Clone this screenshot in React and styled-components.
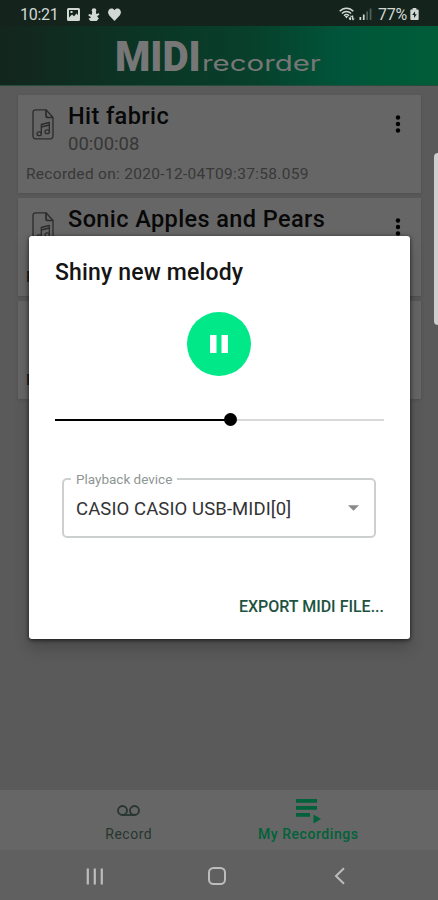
import styled, { createGlobalStyle } from 'styled-components';

const recordings = [
    { id: 1, name: 'Hit fabric', duration: '00:00:08', date: '2020-12-04T09:37:58.059' },
    { id: 2, name: 'Sonic Apples and Pears', duration: '00:00:12', date: '2020-12-04T09:36:21.310', dark: true },
    { id: 3, name: 'Shiny new melody', duration: '00:00:15', date: '2020-12-04T09:35:02.127', dark: true },
];

function StatusBar () {
    return (
        <StatusBox>
            <Clock>10:21</Clock>
            <StatusIcons>
                <svg width="13" height="13" viewBox="0 0 13 13">
                    <path fillRule="evenodd" d="M1.5 0h10A1.5 1.5 0 0 1 13 1.5v10a1.5 1.5 0 0 1-1.5 1.5h-10A1.5 1.5 0 0 1 0 11.5v-10A1.5 1.5 0 0 1 1.500 0zM2 2v7.500l3-3 2 1.800L9.500 5.500 11 7V2zM3.500 3h2v2h-2z" fill="currentColor" />
                </svg>
                <svg width="12" height="13" viewBox="0 0 12 13">
                    <circle cx="6" cy="2.600" r="2.300" fill="currentColor" />
                    <path d="M4.200 4h3.700l.4 2 2.500-.8.7 1.400-2.400 1.600 1.800 2.400L8.700 13H2.500L.5 10.800l2.700-1.600L.3 7.600 1 6l2.800.8z" fill="currentColor" />
                </svg>
                <svg width="13" height="13" viewBox="0 0 13 13">
                    <path d="M6.500 13 1.300 7.500C-1.200 4.600.4.800 3.400.600 4.800.5 5.800 1.100 6.500 2.200 7.200 1.100 8.200.5 9.600.6c3 .2 4.600 4 2.100 6.900z" fill="currentColor" />
                </svg>
            </StatusIcons>
            <StatusRight>
                <svg width="17" height="14" viewBox="0 0 17 14">
                    <g fill="none" stroke="currentColor" strokeWidth="1.500">
                        <path d="M.7 4.300C4.500.1 10.500.1 14.300 4.300" />
                        <path d="M2.900 6.600c2.700-2.800 6.500-2.800 9.200 0" />
                        <path d="M5 8.700c1.500-1.500 3.500-1.500 5 0" />
                    </g>
                    <path d="M5.800 9h3.400L7.500 11.500zM9.500 10.500h2V8L13 10h-1v3h-1.500zM12.800 8.500h1.500v3h1.500L14 13.500l-1.200-1.500z" fill="currentColor" />
                </svg>
                <svg width="13" height="12" viewBox="0 0 13 12">
                    <path d="M.5 9h1.700v3H.5zM3.900 6.500h1.700V12H3.900z" fill="currentColor" />
                    <path d="M7.300 3.500H9V12H7.300zM10.700.5h1.700V12h-1.700z" fill="#52605a" />
                </svg>
                <Percent>77%</Percent>
                <svg width="9" height="12" viewBox="0 0 9 13">
                    <path fillRule="evenodd" d="M2.500 0h4v1.500H8A1 1 0 0 1 9 2.500V12a1 1 0 0 1-1 1H1a1 1 0 0 1-1-1V2.500a1 1 0 0 1 1-1h1.500zM5.100 3.500 2 7.700h2v3.200l3-4.100H5.100z" fill="currentColor" />
                </svg>
            </StatusRight>
        </StatusBox>
    );
}

function Recording ({ item }) {
    return (
        <Card>
            <CardTop>
                <FileIcon width="22" height="31" viewBox="0 0 22 31">
                    <g fill="none" stroke="currentColor" strokeWidth="1.300" strokeLinejoin="round">
                        <path d="M14 .8H3.500A2.500 2.500 0 0 0 1 3.300v24A2.500 2.500 0 0 0 3.500 29.800h15a2.500 2.500 0 0 0 2.500-2.500V8.500z" />
                        <path d="M14 .8v5.700a2 2 0 0 0 2 2h5" strokeWidth="1.700" />
                        <path d="M9.300 24.800v-9.300l8-2v9.300M9.300 18l8-2" />
                        <ellipse cx="7.200" cy="24.800" rx="2.200" ry="1.900" />
                        <ellipse cx="15.200" cy="22.800" rx="2.200" ry="1.900" />
                    </g>
                </FileIcon>
                <CardText>
                    <Name>{item.name}</Name>
                    <Duration>{item.duration}</Duration>
                </CardText>
                <MoreIcon width="6" height="20" viewBox="0 0 6 20">
                    <circle cx="3" cy="3.500" r="2.200" />
                    <circle cx="3" cy="10" r="2.200" />
                    <circle cx="3" cy="16.500" r="2.200" />
                </MoreIcon>
            </CardTop>
            <RecordedOn $dark={item.dark}>Recorded on: {item.date}</RecordedOn>
        </Card>
    );
}

function PlayerDialog () {
    const progress = 53.4;

    return (
        <Dialog>
            <DialogTitle>Shiny new melody</DialogTitle>
            <PauseButton>
                <svg width="18" height="18" viewBox="0 0 18 18">
                    <path d="M0 0h6.500v18H0zM11.500 0H18v18h-6.500z" fill="#fff" />
                </svg>
            </PauseButton>
            <Slider>
                <Played style={{ width: `${progress}%` }} />
                <Thumb />
                <Remaining />
            </Slider>
            <Select>
                <SelectLabel>Playback device</SelectLabel>
                <SelectValue>CASIO CASIO USB-MIDI[0]</SelectValue>
                <svg width="11" height="6" viewBox="0 0 12 6">
                    <path d="M0 0h12L6 6z" fill="#8a8a8a" />
                </svg>
            </Select>
            <ExportButton>EXPORT MIDI FILE...</ExportButton>
        </Dialog>
    );
}

export default function App () {
    return (
        <>
            <GlobalStyle />
            <Screen>
                <StatusBar />
                <Header>
                    <LogoBold>MIDI</LogoBold>
                    <LogoThin>recorder</LogoThin>
                </Header>
                <List>
                    {recordings.map((item) => <Recording key={item.id} item={item} />)}
                </List>
                <TabBar>
                    <Tab>
                        <TabIcon>
                            <svg width="23" height="12" viewBox="0 0 23 12">
                                <g fill="none" stroke="currentColor" strokeWidth="1.800">
                                    <circle cx="5.500" cy="5.500" r="4.500" />
                                    <circle cx="17.500" cy="5.500" r="4.500" />
                                    <path d="M5.500 10h12" />
                                </g>
                            </svg>
                        </TabIcon>
                        <TabName>Record</TabName>
                    </Tab>
                    <Tab $active>
                        <TabIcon>
                            <svg width="25" height="25" viewBox="0 0 25 25">
                                <path d="M0 0h21v3.700H0zM0 7h21v3.700H0zM0 14h14v3.700H0zM17.500 15.500v9l7.500-4.500z" fill="currentColor" />
                            </svg>
                        </TabIcon>
                        <TabName $active>My Recordings</TabName>
                    </Tab>
                </TabBar>
                <SystemBar>
                    <svg width="18" height="17" viewBox="0 0 18 17">
                        <path d="M1.800.5v16M8.800.5v16M15.800.5v16" stroke="currentColor" strokeWidth="2.200" />
                    </svg>
                    <HomeIcon width="18" height="18" viewBox="0 0 18 18">
                        <rect x="1" y="1" width="16" height="16" rx="4.500" fill="none" stroke="currentColor" strokeWidth="2" />
                    </HomeIcon>
                    <svg width="12" height="18" viewBox="0 0 12 18">
                        <path d="M10 1.200 2 9l8 7.800" fill="none" stroke="currentColor" strokeWidth="2" />
                    </svg>
                </SystemBar>
                <PlayerDialog />
                <EdgeHandle />
            </Screen>
        </>
    );
}

const GlobalStyle = createGlobalStyle`
    * {
        box-sizing: border-box;
    }

    body {
        margin: 0;
        font-family: Roboto, sans-serif;
    }

    h1, h2, p {
        margin: 0;
    }

    svg {
        display: block;
        flex-shrink: 0;
    }
`;

const Screen = styled.div`
    width: 438px;
    height: 900px;
    display: flex;
    flex-direction: column;
    position: relative;
    overflow: hidden;
    background-color: #5a5a5a;
`;

const StatusBox = styled.div`
    height: 26px;
    padding: 2px 19px 0 20px;
    display: flex;
    align-items: center;
    color: #d2d8d4;
    background-color: #14241d;
`;

const Clock = styled.span`
    width: 47px;
    font-size: 16px;
    letter-spacing: -0.3px;
`;

const StatusIcons = styled.div`
    display: flex;
    gap: 8px;
`;

const StatusRight = styled.div`
    display: flex;
    align-items: center;
    gap: 3px;
    margin-left: auto;
`;

const Percent = styled.span`
    font-size: 16px;
    letter-spacing: -0.2px;
    margin: 0 0 0 3px;
`;

const Header = styled.header`
    height: 60px;
    padding-left: 115px;
    display: flex;
    color: #777;
    background: linear-gradient(90deg, #13251e 0%, #0c3324 28%, #07402b 58%, #00553a 78%, #005d38 100%);
    border-bottom: 1px solid #254d3d;
`;

const LogoBold = styled.span`
    width: 87px;
    font-size: 42px;
    line-height: 61px;
    font-weight: 900;
    transform: scaleX(0.96);
    transform-origin: left;
`;

const LogoThin = styled.span`
    font-family: Inter, sans-serif;
    font-size: 21px;
    line-height: 75px;
    font-weight: 400;
    transform: scaleX(1.4);
    transform-origin: left;
`;

const List = styled.main`
    flex: 1;
    min-height: 0;
    padding: 9px 17px 0 18px;
    display: flex;
    flex-direction: column;
    gap: 5px;
`;

const Card = styled.article`
    height: 98px;
    padding: 7px 20px 0 8px;
    background-color: #666;
    box-shadow: 0 1px 3px rgba(0, 0, 0, 0.12);
`;

const CardTop = styled.div`
    height: 62px;
    display: flex;
`;

const FileIcon = styled.svg`
    margin: 7px 14px 0 6px;
    color: #2c2c2c;
`;

const MoreIcon = styled.svg`
    margin-top: 12px;
`;

const CardText = styled.div`
    flex: 1;
`;

const Name = styled.h2`
    padding-top: 1px;
    font-size: 23.500px;
    line-height: 27px;
    font-weight: 500;
    letter-spacing: 0.4px;
    color: #080808;
`;

const Duration = styled.p`
    font-size: 18.500px;
    line-height: 28px;
    color: #363636;
`;

const RecordedOn = styled.p`
    font-size: 15.500px;
    line-height: 20px;
    letter-spacing: 0.3px;
    color: ${({ $dark }) => $dark ? '#111' : '#383838'};
`;

const TabBar = styled.nav`
    height: 60px;
    padding: 0 40px 0 39px;
    display: flex;
    background-color: #666;
`;

const Tab = styled.div`
    flex: 1;
    display: flex;
    flex-direction: column;
    align-items: center;
    color: ${({ $active }) => $active ? '#00623a' : '#283630'};
`;

const TabIcon = styled.div`
    height: 34px;
    display: flex;
    align-items: center;
    padding-top: 8px;
`;

const TabName = styled.span`
    font-size: 14px;
    line-height: 20px;
    font-weight: ${({ $active }) => $active ? 500 : 400};
    letter-spacing: ${({ $active }) => $active ? '0.55px' : '0.5px'};
`;

const SystemBar = styled.div`
    height: 50px;
    padding: 2px 92px 0 86px;
    display: flex;
    align-items: center;
    justify-content: space-between;
    color: #bcbcbc;
    background-color: #606060;
`;

const HomeIcon = styled.svg`
    margin-right: 4px;
`;

const Dialog = styled.section`
    width: 381px;
    height: 403px;
    padding: 21px 26px 20px;
    display: flex;
    flex-direction: column;
    position: absolute;
    top: 236px;
    left: 29px;
    border-radius: 3px;
    background-color: #fff;
    box-shadow: 0 1px 4px rgba(0, 0, 0, 0.7), 0 9px 16px rgba(0, 0, 0, 0.2);
`;

const DialogTitle = styled.h1`
    padding-top: 1px;
    font-size: 23px;
    line-height: 29px;
    font-weight: 500;
    letter-spacing: 0.15px;
    color: #151515;
`;

const PauseButton = styled.button`
    width: 64px;
    height: 64px;
    margin: 25px 1px 0 0;
    padding: 0;
    display: flex;
    align-items: center;
    justify-content: center;
    align-self: center;
    border: none;
    border-radius: 50%;
    background-color: #00e887;
    cursor: pointer;
`;

const Slider = styled.div`
    height: 13px;
    margin-top: 37px;
    display: flex;
    align-items: center;
`;

const Played = styled.div`
    height: 2px;
    background-color: #000;
`;

const Thumb = styled.div`
    width: 13px;
    height: 13px;
    margin: 0 -6px 0 -7px;
    border-radius: 50%;
    background-color: #000;
    z-index: 1;
`;

const Remaining = styled.div`
    flex: 1;
    height: 2px;
    background-color: #d8d8d8;
`;

const Select = styled.div`
    height: 60px;
    margin: 52px 8px 0 7px;
    padding: 0 15px 0 12px;
    display: flex;
    align-items: center;
    justify-content: space-between;
    position: relative;
    border: 2px solid #ccd0ce;
    border-radius: 5px;
`;

const SelectLabel = styled.label`
    padding: 0 5px;
    position: absolute;
    top: -9px;
    left: 7px;
    font-size: 13.500px;
    line-height: 16px;
    color: #8f9693;
    background-color: #fff;
`;

const SelectValue = styled.span`
    padding-top: 1px;
    font-size: 18.500px;
    letter-spacing: 0.1px;
    color: #333;
`;

const ExportButton = styled.button`
    margin-top: auto;
    padding: 0;
    align-self: flex-end;
    border: none;
    font-family: inherit;
    font-size: 16px;
    line-height: 25px;
    font-weight: 500;
    color: #20523f;
    background: none;
    cursor: pointer;
`;

const EdgeHandle = styled.div`
    width: 8px;
    height: 172px;
    position: absolute;
    top: 153px;
    right: -4px;
    border-radius: 5px;
    background-color: #cfcfcf;
`;
